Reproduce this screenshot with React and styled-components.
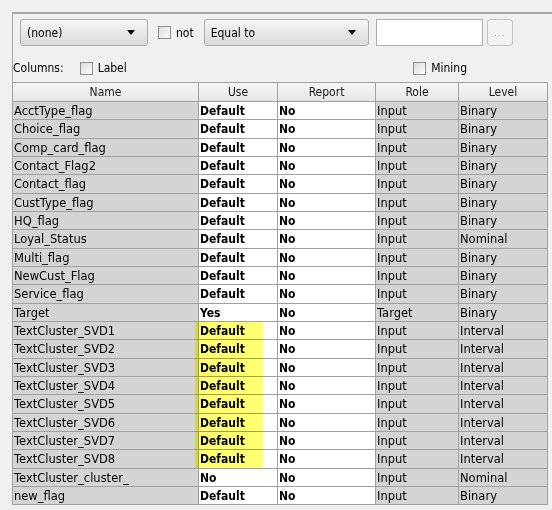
import React from "react";
import styled, { createGlobalStyle } from "styled-components";

const rows = [
  ["AcctType_flag", "Default", "No", "Input", "Binary"],
  ["Choice_flag", "Default", "No", "Input", "Binary"],
  ["Comp_card_flag", "Default", "No", "Input", "Binary"],
  ["Contact_Flag2", "Default", "No", "Input", "Binary"],
  ["Contact_flag", "Default", "No", "Input", "Binary"],
  ["CustType_flag", "Default", "No", "Input", "Binary"],
  ["HQ_flag", "Default", "No", "Input", "Binary"],
  ["Loyal_Status", "Default", "No", "Input", "Nominal"],
  ["Multi_flag", "Default", "No", "Input", "Binary"],
  ["NewCust_Flag", "Default", "No", "Input", "Binary"],
  ["Service_flag", "Default", "No", "Input", "Binary"],
  ["Target", "Yes", "No", "Target", "Binary"],
  ["TextCluster_SVD1", "Default", "No", "Input", "Interval"],
  ["TextCluster_SVD2", "Default", "No", "Input", "Interval"],
  ["TextCluster_SVD3", "Default", "No", "Input", "Interval"],
  ["TextCluster_SVD4", "Default", "No", "Input", "Interval"],
  ["TextCluster_SVD5", "Default", "No", "Input", "Interval"],
  ["TextCluster_SVD6", "Default", "No", "Input", "Interval"],
  ["TextCluster_SVD7", "Default", "No", "Input", "Interval"],
  ["TextCluster_SVD8", "Default", "No", "Input", "Interval"],
  ["TextCluster_cluster_", "No", "No", "Input", "Nominal"],
  ["new_flag", "Default", "No", "Input", "Binary"],
];

const headers = ["Name", "Use", "Report", "Role", "Level"];
// which columns are editable (white, bold)
const editable = [false, true, true, false, false];

const GlobalStyle = createGlobalStyle`
  body {
    margin: 0;
    background: #f0f0f0;
    font-family: "DejaVu Sans", sans-serif;
    font-size: 11px;
    color: #000;
  }
`;

const Page = styled.div`
  position: relative;
  width: 552px;
  height: 510px;
  padding: 12px 0 0 12px;
  box-sizing: border-box;
  overflow: hidden;
`;

const Frame = styled.div`
  border-top: 2px solid #a6a6a6;
  border-left: 1px solid #a6a6a6;
  padding-top: 5px;
`;

const FilterRow = styled.div`
  display: flex;
  align-items: center;
  padding-left: 7px;
  height: 27px;
`;

const Combo = styled.div`
  box-sizing: border-box;
  width: ${(p) => p.$w}px;
  height: 27px;
  margin-right: ${(p) => p.$mr}px;
  display: flex;
  align-items: center;
  justify-content: space-between;
  padding: 0 12px 0 6px;
  border: 1px solid #ababab;
  border-radius: 3px;
  background: linear-gradient(#f7f7f7, #e6e6e6 50%, #dcdcdc);
  font-family: "DejaVu Sans Condensed", "DejaVu Sans", sans-serif;
  font-size: 12px;
`;

const Arrow = styled.span`
  width: 0;
  height: 0;
  border-left: 4px solid transparent;
  border-right: 4px solid transparent;
  border-top: 5px solid #000;
`;

const Check = styled.span`
  box-sizing: border-box;
  width: 13px;
  height: 13px;
  border: 1px solid #8e8f8f;
  background: linear-gradient(135deg, #dcdcdc, #fbfbfb);
  margin-right: 5px;
  flex-shrink: 0;
`;

const CheckText = styled.span`
  font-family: "DejaVu Sans Condensed", "DejaVu Sans", sans-serif;
  font-size: 12px;
  margin-right: ${(p) => p.$mr || 0}px;
`;

const TextBox = styled.div`
  box-sizing: border-box;
  width: 107px;
  height: 27px;
  border: 1px solid #abadb3;
  background: #fff;
  margin-right: 4px;
`;

const DotsButton = styled.div`
  box-sizing: border-box;
  width: 26px;
  height: 27px;
  border: 1px solid #c4c4c4;
  border-radius: 3px;
  background: #f3f3f3;
  color: #9a9a9a;
  font-size: 9px;
  display: flex;
  align-items: flex-end;
  justify-content: center;
  padding-bottom: 7px;
  letter-spacing: 1px;
`;

const ColumnsRow = styled.div`
  display: flex;
  align-items: center;
  height: 28px;
  margin-top: 8px;
`;

const ColumnsLabel = styled.span`
  font-family: "DejaVu Sans Condensed", "DejaVu Sans", sans-serif;
  font-size: 12px;
  margin: 0 16px 0 0;
`;

const Spacer = styled.div`
  flex: 1;
`;

const Table = styled.div`
  display: grid;
  grid-template-columns: 185px 78px 97px 82px 88px;
  grid-template-rows: 18px;
  grid-auto-rows: 17.33px;
  gap: 1px;
  padding: 1px;
  width: fit-content;
  background: #a0a0a0;
  margin-left: -1px;
`;

const HeadCell = styled.div`
  background: linear-gradient(#f6f6f6, #e6e6e6);
  text-align: center;
  font-family: "DejaVu Sans Condensed", "DejaVu Sans", sans-serif;
  font-size: 12px;
  line-height: 18px;
  color: #1a1a1a;
`;

const Cell = styled.div`
  background: ${(p) => (p.$edit ? "#fff" : "#d4d4d4")};
  font-family: ${(p) =>
    p.$edit
      ? '"DejaVu Sans Condensed", "DejaVu Sans", sans-serif'
      : '"DejaVu Sans", sans-serif'};
  font-weight: ${(p) => (p.$edit ? "bold" : "normal")};
  font-size: ${(p) => (p.$edit ? 12 : 11.5)}px;
  line-height: 18px;
  padding-left: 1px;
  white-space: nowrap;
  overflow: hidden;
`;

const Highlight = styled.div`
  position: absolute;
  left: 195px;
  top: 322px;
  width: 68px;
  height: 146px;
  background: #ffff70;
  mix-blend-mode: multiply;
  pointer-events: none;
`;

export default function App() {
  return (
    <>
      <GlobalStyle />
      <Page>
        <Frame>
          <FilterRow>
            <Combo $w={128} $mr={10}>
              (none)
              <Arrow />
            </Combo>
            <Check />
            <CheckText $mr={10}>not</CheckText>
            <Combo $w={165} $mr={7}>
              Equal to
              <Arrow />
            </Combo>
            <TextBox />
            <DotsButton>...</DotsButton>
          </FilterRow>
          <ColumnsRow>
            <ColumnsLabel>Columns:</ColumnsLabel>
            <Check />
            <CheckText>Label</CheckText>
            <Spacer />
            <Check />
            <CheckText $mr={85}>Mining</CheckText>
          </ColumnsRow>
          <Table>
            {headers.map((h) => (
              <HeadCell key={h}>{h}</HeadCell>
            ))}
            {rows.map((r, i) =>
              r.map((v, j) => (
                <Cell key={i + "-" + j} $edit={editable[j]}>
                  {v}
                </Cell>
              ))
            )}
          </Table>
        </Frame>
        <Highlight />
      </Page>
    </>
  );
}
